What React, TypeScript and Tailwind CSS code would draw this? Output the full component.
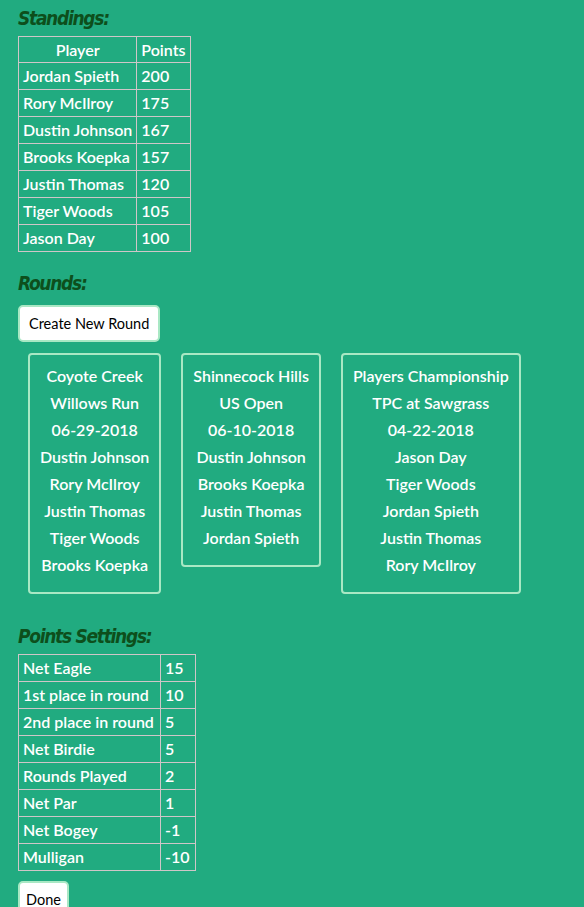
import React from "react";

const standings = [
  ["Jordan Spieth", "200"],
  ["Rory McIlroy", "175"],
  ["Dustin Johnson", "167"],
  ["Brooks Koepka", "157"],
  ["Justin Thomas", "120"],
  ["Tiger Woods", "105"],
  ["Jason Day", "100"],
];

const rounds = [
  ["Coyote Creek", "Willows Run", "06-29-2018", "Dustin Johnson", "Rory McIlroy", "Justin Thomas", "Tiger Woods", "Brooks Koepka"],
  ["Shinnecock Hills", "US Open", "06-10-2018", "Dustin Johnson", "Brooks Koepka", "Justin Thomas", "Jordan Spieth"],
  ["Players Championship", "TPC at Sawgrass", "04-22-2018", "Jason Day", "Tiger Woods", "Jordan Spieth", "Justin Thomas", "Rory McIlroy"],
];

const points = [
  ["Net Eagle", "15"],
  ["1st place in round", "10"],
  ["2nd place in round", "5"],
  ["Net Birdie", "5"],
  ["Rounds Played", "2"],
  ["Net Par", "1"],
  ["Net Bogey", "-1"],
  ["Mulligan", "-10"],
];

function Heading({ children }: { children: React.ReactNode }) {
  return (
    <h2
      className="text-[19px] font-bold italic text-[#0d4f1c] leading-[24px] tracking-[-1.3px]"
      style={{ fontFamily: '"DejaVu Sans Condensed", "DejaVu Sans", sans-serif' }}
    >
      {children}
    </h2>
  );
}

export default function App() {
  return (
    <div
      className="min-h-[907px] w-[584px] bg-[#21ab80] text-white pl-[18px] pt-[6px] text-[16px] font-semibold"
      style={{ fontFamily: 'Lato, "Noto Sans", sans-serif' }}
    >
      <Heading>Standings:</Heading>
      <table className="mt-[6px] border-collapse">
        <thead>
          <tr>
            <th className="border border-[#cfc6c8] px-[5px] h-[26px] font-semibold text-center w-[118px]">Player</th>
            <th className="border border-[#cfc6c8] px-[4px] h-[26px] font-semibold text-center">Points</th>
          </tr>
        </thead>
        <tbody>
          {standings.map(([n, p]) => (
            <tr key={n}>
              <td className="border border-[#cfc6c8] px-[4px] h-[27px] whitespace-nowrap">{n}</td>
              <td className="border border-[#cfc6c8] px-[4px] h-[27px]">{p}</td>
            </tr>
          ))}
        </tbody>
      </table>

      <div className="mt-[19px]">
        <Heading>Rounds:</Heading>
      </div>
      <button className="mt-[10px] h-[37px] px-[9px] bg-white text-black border-2 border-[#a9e8c4] rounded-[5px] text-[14.5px] font-normal">
        Create New Round
      </button>
      <div className="flex items-start gap-[20px] ml-[10px] mt-[11px]">
        {rounds.map((r, i) => (
          <div key={i} className="border-2 border-[#a9e8c4] rounded-[4px] px-[10px] pt-[7px] pb-[14px] flex flex-col items-center">
            {r.map((t, j) => (
              <div key={j} className="leading-[27px] whitespace-nowrap">{t}</div>
            ))}
          </div>
        ))}
      </div>

      <div className="mt-[30px]">
        <Heading>Points Settings:</Heading>
      </div>
      <table className="mt-[6px] border-collapse">
        <tbody>
          {points.map(([n, p]) => (
            <tr key={n}>
              <td className="border border-[#cfc6c8] px-[4px] h-[27px] whitespace-nowrap w-[142px]">{n}</td>
              <td className="border border-[#cfc6c8] px-[4px] h-[27px] w-[35px]">{p}</td>
            </tr>
          ))}
        </tbody>
      </table>
      <button className="mt-[10px] h-[37px] px-[6px] bg-white text-black border-2 border-[#a9e8c4] rounded-[5px] text-[14.5px] font-normal">
        Done
      </button>
    </div>
  );
}
